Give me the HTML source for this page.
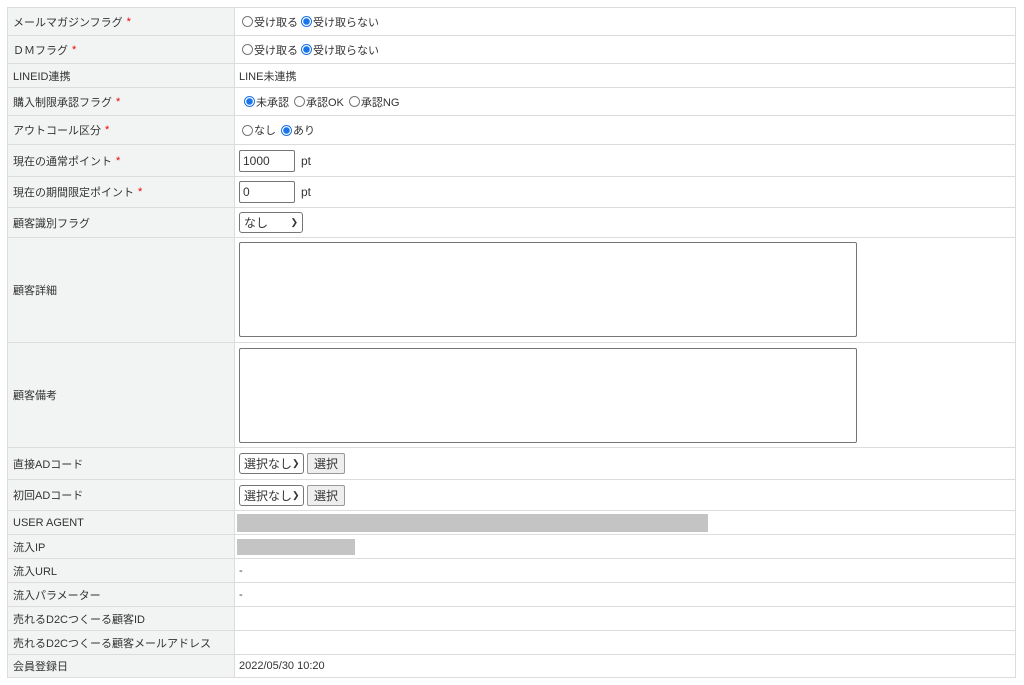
<!DOCTYPE html>
<html><head><meta charset="utf-8"><style>
body{margin:0;background:#fff;font-family:"Liberation Sans","Noto Sans CJK JP",sans-serif;font-size:11px;color:#333;white-space:nowrap;}
.r{position:absolute;left:7px;width:1009px;border:1px solid #dcdcdc;border-top:none;box-sizing:border-box;}
.r:first-child{border-top:1px solid #dcdcdc}
.l{position:absolute;left:0;top:0;bottom:0;width:227px;background:#f2f3f3;border-right:1px solid #dcdcdc;box-sizing:border-box;padding-left:5px;display:flex;align-items:center;}
.v{position:absolute;left:231px;top:0;bottom:0;right:0;display:flex;align-items:center;}
.s{color:#e00;margin-left:4px}
.rad{display:inline-block;width:11px;height:11px;border:1px solid #777;border-radius:50%;box-sizing:border-box;margin:0 1px 0 3px;vertical-align:-1px;}
.rad.on{border:1px solid #1a73e8;background:radial-gradient(circle,#1a73e8 3px,#fff 3.5px);}
.in{width:56px;height:22px;border:1px solid #767676;border-radius:2px;box-sizing:border-box;padding-left:3px;display:flex;align-items:center;font-size:12px;}
.sel{height:21px;border:1px solid #767676;border-radius:3px;box-sizing:border-box;display:flex;align-items:center;padding-left:4px;justify-content:space-between;padding-right:4px;font-size:12px;}
.btn{height:21px;border:1px solid #999;background:#eee;border-radius:2px;box-sizing:border-box;padding:0 6px;display:flex;align-items:center;margin-left:3px;font-size:12px;}
.ta{position:absolute;left:0;width:618px;height:95px;border:1px solid #767676;border-radius:2px;box-sizing:border-box;}
</style></head><body>
<div style="position:relative">
<div class="r" style="top:7px;height:29px"><div class="l">メールマガジンフラグ<span class="s">*</span></div><div class="v"><span class="rad" style="margin-left:3px"></span>受け取る<span class="rad on"></span>受け取らない</div></div>
<div class="r" style="top:36px;height:28px"><div class="l">ＤＭフラグ<span class="s">*</span></div><div class="v"><span class="rad" style="margin-left:3px"></span>受け取る<span class="rad on"></span>受け取らない</div></div>
<div class="r" style="top:64px;height:24px"><div class="l">LINEID連携</div><div class="v">LINE未連携</div></div>
<div class="r" style="top:88px;height:28px"><div class="l">購入制限承認フラグ<span class="s">*</span></div><div class="v"><span class="rad on" style="margin-left:5px"></span>未承認<span class="rad" style="margin-left:5px"></span>承認OK<span class="rad" style="margin-left:5px"></span>承認NG</div></div>
<div class="r" style="top:116px;height:29px"><div class="l">アウトコール区分<span class="s">*</span></div><div class="v"><span class="rad" style="margin-left:3px"></span>なし<span class="rad on" style="margin-left:5px"></span>あり</div></div>
<div class="r" style="top:145px;height:32px"><div class="l">現在の通常ポイント<span class="s">*</span></div><div class="v"><div class="in">1000</div><span style="margin-left:6px;font-size:12px">pt</span></div></div>
<div class="r" style="top:177px;height:31px"><div class="l">現在の期間限定ポイント<span class="s">*</span></div><div class="v"><div class="in">0</div><span style="margin-left:6px;font-size:12px">pt</span></div></div>
<div class="r" style="top:208px;height:30px"><div class="l">顧客識別フラグ</div><div class="v"><div class="sel" style="width:64px">なし<span style="font-size:9px">&#10095;</span></div></div></div>
<div class="r" style="top:238px;height:105px"><div class="l">顧客詳細</div><div class="v"><div class="ta" style="top:4px"></div></div></div>
<div class="r" style="top:343px;height:105px"><div class="l">顧客備考</div><div class="v"><div class="ta" style="top:5px"></div></div></div>
<div class="r" style="top:448px;height:32px"><div class="l">直接ADコード</div><div class="v"><div class="sel" style="width:65px">選択なし<span style="font-size:9px">&#10095;</span></div><div class="btn">選択</div></div></div>
<div class="r" style="top:480px;height:31px"><div class="l">初回ADコード</div><div class="v"><div class="sel" style="width:65px">選択なし<span style="font-size:9px">&#10095;</span></div><div class="btn">選択</div></div></div>
<div class="r" style="top:511px;height:24px"><div class="l">USER AGENT</div><div class="v"><div style="margin-left:-2px;width:471px;height:18px;background:#c4c4c4"></div></div></div>
<div class="r" style="top:535px;height:24px"><div class="l">流入IP</div><div class="v"><div style="margin-left:-2px;width:118px;height:16px;background:#c4c4c4"></div></div></div>
<div class="r" style="top:559px;height:24px"><div class="l">流入URL</div><div class="v">-</div></div>
<div class="r" style="top:583px;height:24px"><div class="l">流入パラメーター</div><div class="v">-</div></div>
<div class="r" style="top:607px;height:24px"><div class="l">売れるD2Cつくーる顧客ID</div><div class="v"></div></div>
<div class="r" style="top:631px;height:24px"><div class="l">売れるD2Cつくーる顧客メールアドレス</div><div class="v"></div></div>
<div class="r" style="top:655px;height:23px"><div class="l">会員登録日</div><div class="v">2022/05/30 10:20</div></div>
</div>
</body></html>
